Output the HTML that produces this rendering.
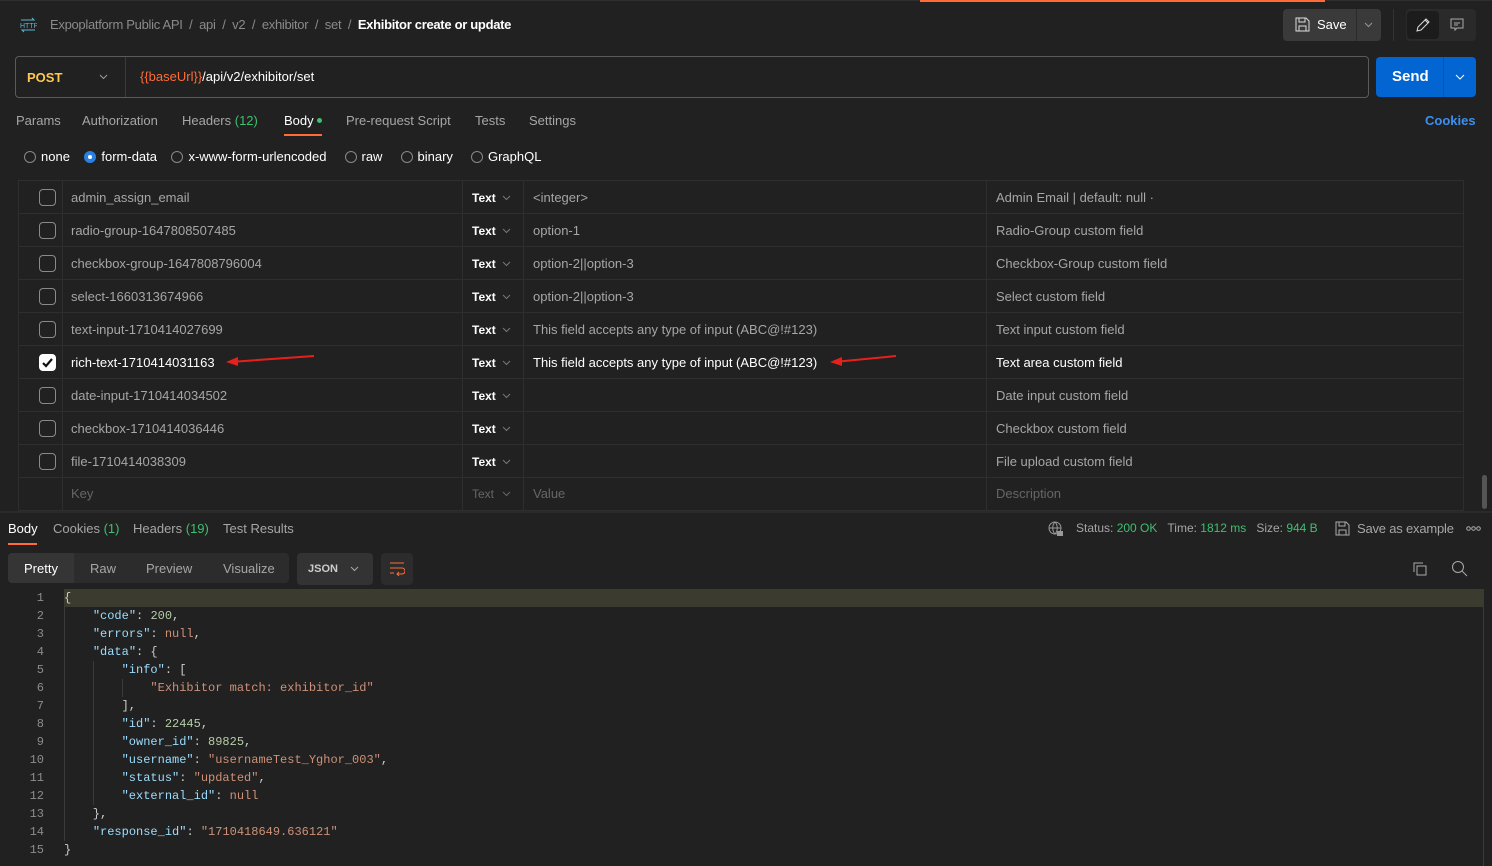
<!DOCTYPE html>
<html><head><style>
*{margin:0;padding:0;box-sizing:border-box}
body{width:1492px;height:866px;background:#212121;font-family:"Liberation Sans",sans-serif;font-size:13px;color:#a6a6a6;position:relative;overflow:hidden}
.a{position:absolute;white-space:nowrap}
.w{color:#fff}
.g{color:#3fbf6f}
.row{position:absolute;left:18px;width:1446px;height:33px;border-bottom:1px solid #2e2e2e}
.cb{position:absolute;left:21px;top:8px;width:17px;height:17px;border:1px solid #8a8a8a;border-radius:4px}
.k{position:absolute;left:53px;top:9px}
.t{position:absolute;left:454px;top:10px;color:#fff;font-size:12px;font-weight:bold}
.chev{position:absolute;left:484px;top:14px}
.v{position:absolute;left:515px;top:9px}
.d{position:absolute;left:978px;top:9px}
.vl{position:absolute;top:181px;height:330px;width:1px;background:#2e2e2e}
.code{position:absolute;left:0;top:589px;font-family:"Liberation Mono",monospace;font-size:12px;line-height:18px}
.ln{position:absolute;left:0;width:44px;text-align:right;color:#8c8c8c}
.cl{position:absolute;left:64px;color:#ccc;white-space:pre}
.s{color:#ce9178}.kk{color:#9cdcfe}.n{color:#b5cea8}.nu{color:#ce9178}
.rad{display:inline-block;width:12px;height:12px;border:1px solid #888;border-radius:50%;vertical-align:-2px;margin-right:5px}
</style></head><body>
<div class="a" style="left:0;top:0;width:1492px;height:1px;background:#2e2e2e"></div>
<div class="a" style="left:920px;top:0;width:405px;height:2px;background:#ff6c37"></div>
<svg class="a" style="left:19px;top:17px" width="18" height="16" viewBox="0 0 18 16"><text x="1" y="11" font-size="7" fill="#59b8d6" font-family="Liberation Sans">HTTP</text><path d="M2 3h13l-2-2M16 13H3l2 2" stroke="#59b8d6" fill="none"/></svg>
<div class="a" style="left:50px;top:17px;color:#8a8a8a;letter-spacing:-0.3px">Expoplatform Public API &nbsp;/&nbsp; api &nbsp;/&nbsp; v2 &nbsp;/&nbsp; exhibitor &nbsp;/&nbsp; set &nbsp;/&nbsp; <b class="w">Exhibitor create or update</b></div>
<div class="a" style="left:1283px;top:9px;width:98px;height:32px;background:#3a3a3a;border-radius:4px"></div>
<div class="a" style="left:1356px;top:9px;width:1px;height:32px;background:#2a2a2a"></div>
<svg class="a" style="left:1295px;top:17px" width="15" height="15" viewBox="0 0 15 15"><path d="M1 1h10l3 3v10H1z M4 1v4h6V1 M4 14V9h7v5" stroke="#ddd" fill="none"/></svg>
<div class="a w" style="left:1317px;top:17px">Save</div>
<svg class="a" style="left:1364px;top:22px" width="9" height="6"><path d="M1 1l3.5 3.5L8 1" stroke="#999" fill="none"/></svg>
<div class="a" style="left:1393px;top:9px;width:1px;height:32px;background:#333"></div>
<div class="a" style="left:1406px;top:9px;width:70px;height:32px;background:#2a2a2a;border-radius:4px"></div>
<div class="a" style="left:1407px;top:11px;width:32px;height:28px;background:#1c1c1c;border-radius:4px"></div>
<svg class="a" style="left:1415px;top:17px" width="16" height="16" viewBox="0 0 16 16"><path d="M2 14l1-4 8-8 3 3-8 8z M10 3l3 3" stroke="#ddd" fill="none"/></svg>
<svg class="a" style="left:1449px;top:17px" width="16" height="16" viewBox="0 0 16 16"><path d="M2 2h12v9H8l-2 2v-2H2z M5 6h6M5 8h4" stroke="#aaa" fill="none"/></svg>
<div class="a" style="left:15px;top:56px;width:1354px;height:42px;border:1px solid #5a5a5a;border-radius:4px"></div>
<div class="a" style="left:125px;top:57px;width:1px;height:40px;background:#3a3a3a"></div>
<div class="a" style="left:27px;top:70px;color:#ffc94d;font-weight:bold">POST</div>
<svg class="a" style="left:99px;top:74px" width="9" height="6"><path d="M1 1l3.5 3.5L8 1" stroke="#999" fill="none"/></svg>
<div class="a" style="left:140px;top:69px;color:#fff"><span style="color:#ff6c37">{{baseUrl}}</span>/api/v2/exhibitor/set</div>
<div class="a" style="left:1376px;top:57px;width:100px;height:40px;background:#0265d2;border-radius:4px"></div>
<div class="a" style="left:1443px;top:57px;width:1px;height:40px;background:#1a4f9a"></div>
<div class="a w" style="left:1392px;top:68px;font-size:15px;font-weight:bold">Send</div>
<svg class="a" style="left:1455px;top:74px" width="10" height="6"><path d="M1 1l4 4 4-4" stroke="#fff" fill="none"/></svg>
<div class="a" style="left:16px;top:113px">Params</div>
<div class="a" style="left:82px;top:113px">Authorization</div>
<div class="a" style="left:182px;top:113px">Headers <span class="g">(12)</span></div>
<div class="a w" style="left:284px;top:113px">Body <span style="display:inline-block;width:5px;height:5px;border-radius:50%;background:#3fbf6f;vertical-align:2px"></span></div>
<div class="a" style="left:284px;top:134px;width:38px;height:2px;background:#ff6c37"></div>
<div class="a" style="left:346px;top:113px">Pre-request Script</div>
<div class="a" style="left:475px;top:113px">Tests</div>
<div class="a" style="left:529px;top:113px">Settings</div>
<div class="a" style="left:1425px;top:113px;color:#3d8ff0;font-weight:bold">Cookies</div>
<div class="a w" style="left:24px;top:149px"><span class="rad"></span>none &nbsp;&nbsp; <span class="rad" style="border:4px solid #2a7fe3;background:#fff"></span>form-data &nbsp;&nbsp; <span class="rad"></span>x-www-form-urlencoded &nbsp;&nbsp;&nbsp; <span class="rad"></span>raw &nbsp;&nbsp;&nbsp; <span class="rad"></span>binary &nbsp;&nbsp;&nbsp; <span class="rad"></span>GraphQL</div>
<div class="a" style="left:18px;top:180px;width:1446px;height:1px;background:#2e2e2e"></div>
<div class="vl" style="left:18px"></div><div class="vl" style="left:62px"></div><div class="vl" style="left:462px"></div><div class="vl" style="left:523px"></div><div class="vl" style="left:986px"></div><div class="vl" style="left:1463px"></div>
<div class="row" style="top:181px"><div class="cb"></div><div class="k">admin_assign_email</div><div class="t">Text</div><svg class="chev" width="9" height="6"><path d="M1 1l3.5 3.5L8 1" stroke="#777" fill="none"/></svg><div class="v">&lt;integer&gt;</div><div class="d">Admin Email | default: null ·</div></div>
<div class="row" style="top:214px"><div class="cb"></div><div class="k">radio-group-1647808507485</div><div class="t">Text</div><svg class="chev" width="9" height="6"><path d="M1 1l3.5 3.5L8 1" stroke="#777" fill="none"/></svg><div class="v">option-1</div><div class="d">Radio-Group custom field</div></div>
<div class="row" style="top:247px"><div class="cb"></div><div class="k">checkbox-group-1647808796004</div><div class="t">Text</div><svg class="chev" width="9" height="6"><path d="M1 1l3.5 3.5L8 1" stroke="#777" fill="none"/></svg><div class="v">option-2||option-3</div><div class="d">Checkbox-Group custom field</div></div>
<div class="row" style="top:280px"><div class="cb"></div><div class="k">select-1660313674966</div><div class="t">Text</div><svg class="chev" width="9" height="6"><path d="M1 1l3.5 3.5L8 1" stroke="#777" fill="none"/></svg><div class="v">option-2||option-3</div><div class="d">Select custom field</div></div>
<div class="row" style="top:313px"><div class="cb"></div><div class="k">text-input-1710414027699</div><div class="t">Text</div><svg class="chev" width="9" height="6"><path d="M1 1l3.5 3.5L8 1" stroke="#777" fill="none"/></svg><div class="v">This field accepts any type of input (ABC@!#123)</div><div class="d">Text input custom field</div></div>
<div class="row" style="top:346px"><div class="cb" style="background:#fff;border-color:#fff"><svg width="15" height="15" style="position:absolute;left:0;top:0"><path d="M3 8l3 3 6-7" stroke="#111" stroke-width="2.2" fill="none"/></svg></div><div class="k w">rich-text-1710414031163</div><div class="t">Text</div><svg class="chev" width="9" height="6"><path d="M1 1l3.5 3.5L8 1" stroke="#777" fill="none"/></svg><div class="v w">This field accepts any type of input (ABC@!#123)</div><div class="d w">Text area custom field</div></div>
<div class="row" style="top:379px"><div class="cb"></div><div class="k">date-input-1710414034502</div><div class="t">Text</div><svg class="chev" width="9" height="6"><path d="M1 1l3.5 3.5L8 1" stroke="#777" fill="none"/></svg><div class="d">Date input custom field</div></div>
<div class="row" style="top:412px"><div class="cb"></div><div class="k">checkbox-1710414036446</div><div class="t">Text</div><svg class="chev" width="9" height="6"><path d="M1 1l3.5 3.5L8 1" stroke="#777" fill="none"/></svg><div class="d">Checkbox custom field</div></div>
<div class="row" style="top:445px"><div class="cb"></div><div class="k">file-1710414038309</div><div class="t">Text</div><svg class="chev" width="9" height="6"><path d="M1 1l3.5 3.5L8 1" stroke="#777" fill="none"/></svg><div class="d">File upload custom field</div></div>
<div class="row" style="top:478px;color:#666"><div class="k" style="top:8px">Key</div><div class="t" style="color:#666;font-weight:normal;top:9px">Text</div><svg class="chev" width="9" height="6" style="top:13px"><path d="M1 1l3.5 3.5L8 1" stroke="#666" fill="none"/></svg><div class="v" style="top:8px">Value</div><div class="d" style="top:8px">Description</div></div>
<svg class="a" style="left:0;top:340px" width="1000" height="40"><path d="M230 22L314 16M834 22L896 16" stroke="#e8201c" stroke-width="2"/><path d="M226 22l12-5v9z M830 22l12-5v9z" fill="#e8201c"/></svg>
<div class="a" style="left:1482px;top:475px;width:5px;height:34px;background:#555;border-radius:3px"></div>
<div class="a" style="left:0;top:511px;width:1492px;height:2px;background:#2a2a2a"></div>
<div class="a w" style="left:8px;top:521px">Body</div>
<div class="a" style="left:8px;top:543px;width:29px;height:2px;background:#ff6c37"></div>
<div class="a" style="left:53px;top:521px">Cookies <span class="g">(1)</span></div>
<div class="a" style="left:133px;top:521px">Headers <span class="g">(19)</span></div>
<div class="a" style="left:223px;top:521px">Test Results</div>
<svg class="a" style="left:1048px;top:521px" width="16" height="16" viewBox="0 0 16 16"><circle cx="7" cy="7" r="6" stroke="#999" fill="none"/><path d="M1 7h12M7 1c-3 3-3 9 0 12M7 1c3 3 3 9 0 12" stroke="#999" fill="none"/><rect x="9" y="10" width="6" height="5" fill="#999"/></svg>
<div class="a" style="left:1076px;top:521px;font-size:12px">Status: <span class="g">200 OK</span> &nbsp;&nbsp;Time: <span class="g">1812 ms</span> &nbsp;&nbsp;Size: <span class="g">944 B</span></div>
<svg class="a" style="left:1335px;top:521px" width="15" height="15" viewBox="0 0 15 15"><path d="M1 1h10l3 3v10H1z M4 1v4h6V1 M4 14V9h7v5" stroke="#aaa" fill="none"/></svg>
<div class="a" style="left:1357px;top:521px;letter-spacing:-0.2px">Save as example</div>
<svg class="a" style="left:1466px;top:526px" width="16" height="5"><circle cx="2.5" cy="2.5" r="1.8" stroke="#aaa" fill="none"/><circle cx="7.5" cy="2.5" r="1.8" stroke="#aaa" fill="none"/><circle cx="12.5" cy="2.5" r="1.8" stroke="#aaa" fill="none"/></svg>
<div class="a" style="left:8px;top:553px;width:281px;height:30px;background:#2c2c2c;border-radius:4px"></div>
<div class="a" style="left:8px;top:553px;width:66px;height:30px;background:#353535;border-radius:4px 0 0 4px"></div>
<div class="a w" style="left:24px;top:561px">Pretty</div>
<div class="a" style="left:90px;top:561px">Raw</div>
<div class="a" style="left:146px;top:561px">Preview</div>
<div class="a" style="left:223px;top:561px">Visualize</div>
<div class="a" style="left:297px;top:553px;width:76px;height:32px;background:#333;border-radius:4px"></div>
<div class="a" style="left:308px;top:563px;color:#ccc;font-size:11px;font-weight:bold">JSON</div>
<svg class="a" style="left:350px;top:566px" width="9" height="6"><path d="M1 1l3.5 3.5L8 1" stroke="#aaa" fill="none"/></svg>
<div class="a" style="left:381px;top:553px;width:32px;height:32px;background:#2c2c2c;border-radius:4px"></div>
<svg class="a" style="left:389px;top:562px" width="16" height="14" viewBox="0 0 16 14"><path d="M1 1h14M1 6h12a3 3 0 010 6H8m2-2l-2 2 2 2M1 11h4" stroke="#ff6c37" fill="none"/></svg>
<svg class="a" style="left:1412px;top:561px" width="16" height="16" viewBox="0 0 16 16"><path d="M5 5h9v9H5z M2 11V2h9" stroke="#aaa" fill="none"/></svg>
<svg class="a" style="left:1451px;top:560px" width="17" height="17" viewBox="0 0 17 17"><circle cx="7" cy="7" r="5.5" stroke="#aaa" fill="none"/><path d="M11 11l5 5" stroke="#aaa"/></svg>
<div class="a" style="left:64px;top:589px;width:1420px;height:18px;background:#3b3b30"></div>
<div class="a" style="left:1483px;top:589px;width:1px;height:277px;background:#3a3a3a"></div>
<div class="a" style="left:64px;top:607px;width:1px;height:234px;background:#3a3a3a"></div>
<div class="a" style="left:93px;top:661px;width:1px;height:144px;background:#3a3a3a"></div>
<div class="a" style="left:122px;top:679px;width:1px;height:18px;background:#3a3a3a"></div>
<div class="code">
<div class="ln" style="top:0">1</div><div class="ln" style="top:18px">2</div><div class="ln" style="top:36px">3</div><div class="ln" style="top:54px">4</div><div class="ln" style="top:72px">5</div><div class="ln" style="top:90px">6</div><div class="ln" style="top:108px">7</div><div class="ln" style="top:126px">8</div><div class="ln" style="top:144px">9</div><div class="ln" style="top:162px">10</div><div class="ln" style="top:180px">11</div><div class="ln" style="top:198px">12</div><div class="ln" style="top:216px">13</div><div class="ln" style="top:234px">14</div><div class="ln" style="top:252px">15</div>
<div class="cl" style="top:0">{</div>
<div class="cl" style="top:18px">    <span class="kk">"code"</span>: <span class="n">200</span>,</div>
<div class="cl" style="top:36px">    <span class="kk">"errors"</span>: <span class="nu">null</span>,</div>
<div class="cl" style="top:54px">    <span class="kk">"data"</span>: {</div>
<div class="cl" style="top:72px">        <span class="kk">"info"</span>: [</div>
<div class="cl" style="top:90px">            <span class="s">"Exhibitor match: exhibitor_id"</span></div>
<div class="cl" style="top:108px">        ],</div>
<div class="cl" style="top:126px">        <span class="kk">"id"</span>: <span class="n">22445</span>,</div>
<div class="cl" style="top:144px">        <span class="kk">"owner_id"</span>: <span class="n">89825</span>,</div>
<div class="cl" style="top:162px">        <span class="kk">"username"</span>: <span class="s">"usernameTest_Yghor_003"</span>,</div>
<div class="cl" style="top:180px">        <span class="kk">"status"</span>: <span class="s">"updated"</span>,</div>
<div class="cl" style="top:198px">        <span class="kk">"external_id"</span>: <span class="nu">null</span></div>
<div class="cl" style="top:216px">    },</div>
<div class="cl" style="top:234px">    <span class="kk">"response_id"</span>: <span class="s">"1710418649.636121"</span></div>
<div class="cl" style="top:252px">}</div>
</div>
</body></html>
